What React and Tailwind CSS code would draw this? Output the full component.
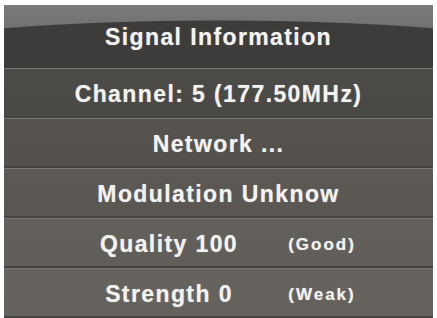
import React from "react";

const font = { fontFamily: '"Liberation Sans", Arial, sans-serif' };

function Row({ bg, children }) {
  return (
    <div
      className={`h-[50px] flex items-center justify-center pt-[3px] border-t border-t-[#7b7975] border-b-2 border-b-[#45433f] ${bg}`}
    >
      {children}
    </div>
  );
}

const base =
  "font-bold text-[#f2f2f0] whitespace-nowrap leading-none [text-shadow:0_0_1px_rgba(255,255,255,0.5)]";
const txt = `${base} text-[23px] tracking-[1.4px]`;
const small = `${base} text-[17px] tracking-[2px]`;

export default function App() {
  return (
    <div className="w-[437px] h-[318px] bg-white pt-[5px] px-[4px] overflow-hidden" style={font}>
      <div className="w-[429px] h-[313px] overflow-hidden flex flex-col">
        <div className="h-[63px] shrink-0 flex items-center justify-center pt-[2px] bg-[radial-gradient(ellipse_395px_48px_at_50%_100%,#3e3c3a_98%,transparent_100%),linear-gradient(#7a7a78,#626260)]">
          <span className={txt}>Signal Information</span>
        </div>
        <Row bg="bg-[linear-gradient(#4d4b48,#4a4845)]">
          <span className={txt}>Channel: 5 (177.50MHz)</span>
        </Row>
        <Row bg="bg-[linear-gradient(#56534f,#54514d)]">
          <span className={txt}>Network ...</span>
        </Row>
        <Row bg="bg-[linear-gradient(#5c5955,#5a5753)]">
          <span className={txt}>Modulation Unknow</span>
        </Row>
        <Row bg="bg-[linear-gradient(#63605c,#615e5a)]">
          <div className="w-full flex items-center">
            <div className="w-[230px] ml-[50px] flex justify-center">
              <span className={txt}>Quality 100</span>
            </div>
            <div className="w-[76px] flex justify-center">
              <span className={small}>(Good)</span>
            </div>
          </div>
        </Row>
        <Row bg="bg-[linear-gradient(#66635f,#65625e)]">
          <div className="w-full flex items-center">
            <div className="w-[230px] ml-[50px] flex justify-center">
              <span className={txt}>Strength 0</span>
            </div>
            <div className="w-[76px] flex justify-center">
              <span className={small}>(Weak)</span>
            </div>
          </div>
        </Row>
      </div>
    </div>
  );
}
